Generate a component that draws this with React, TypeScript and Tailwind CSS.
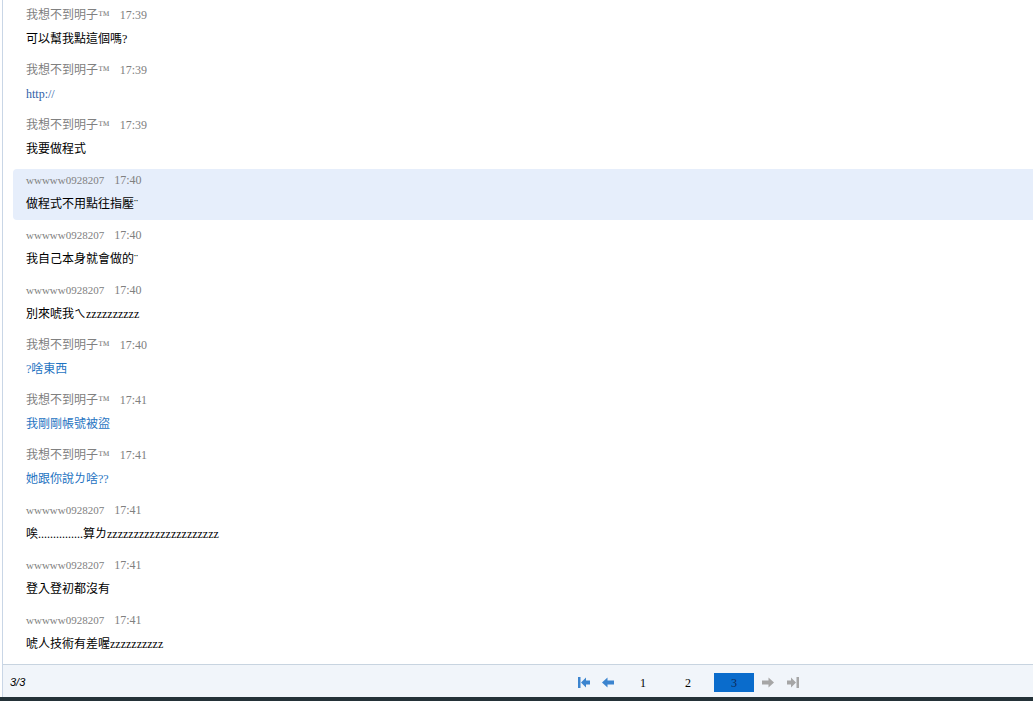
import React from "react";

type Msg = {
  name: string;
  time: string;
  text: string;
  tone?: "blue" | "link";
  active?: boolean;
};

const ME = "我想不到明子™";
const HIM = "wwwww0928207";

const messages: Msg[] = [
  { name: ME, time: "17:39", text: "可以幫我點這個嗎?" },
  { name: ME, time: "17:39", text: "http://", tone: "link" },
  { name: ME, time: "17:39", text: "我要做程式" },
  { name: HIM, time: "17:40", text: "做程式不用點往指壓¨", active: true },
  { name: HIM, time: "17:40", text: "我自己本身就會做的¨" },
  { name: HIM, time: "17:40", text: "別來唬我ㄟzzzzzzzzzz" },
  { name: ME, time: "17:40", text: "?啥東西", tone: "blue" },
  { name: ME, time: "17:41", text: "我剛剛帳號被盜", tone: "blue" },
  { name: ME, time: "17:41", text: "她跟你說ㄌ啥??", tone: "blue" },
  { name: HIM, time: "17:41", text: "唉...............算ㄌzzzzzzzzzzzzzzzzzzzzz" },
  { name: HIM, time: "17:41", text: "登入登初都沒有" },
  { name: HIM, time: "17:41", text: "唬人技術有差喔zzzzzzzzzz" },
];

const font = "font-['Liberation_Serif','Noto_Sans_CJK_TC',serif]";

const FirstIcon = ({ color }: { color: string }) => (
  <svg width="12" height="11" viewBox="0 0 12 11">
    <rect x="0" y="0" width="2.5" height="11" fill={color} />
    <path d="M3 5.5 L8 0.5 L8 3.5 L12 3.5 L12 7.5 L8 7.5 L8 10.5 Z" fill={color} />
  </svg>
);

const PrevIcon = ({ color }: { color: string }) => (
  <svg width="12" height="11" viewBox="0 0 12 11">
    <path d="M0 5.5 L5.5 0.5 L5.5 3.5 L12 3.5 L12 7.5 L5.5 7.5 L5.5 10.5 Z" fill={color} />
  </svg>
);

const NextIcon = ({ color }: { color: string }) => (
  <svg width="12" height="11" viewBox="0 0 12 11">
    <path d="M12 5.5 L6.5 0.5 L6.5 3.5 L0 3.5 L0 7.5 L6.5 7.5 L6.5 10.5 Z" fill={color} />
  </svg>
);

const LastIcon = ({ color }: { color: string }) => (
  <svg width="12" height="11" viewBox="0 0 12 11">
    <path d="M9 5.5 L4 0.5 L4 3.5 L0 3.5 L0 7.5 L4 7.5 L4 10.5 Z" fill={color} />
    <rect x="9.5" y="0" width="2.5" height="11" fill={color} />
  </svg>
);

const App = () => {
  return (
    <div className={`w-[1033px] h-[701px] overflow-hidden bg-white ${font}`}>
      <div className="ml-[2px] h-[697px] border-l border-[#c9d6e6] flex flex-col">
        <div className="h-[664px] overflow-hidden">
          {messages.map((m, i) => (
            <div key={i} className="h-[55px] pt-[4px] pl-[10px]">
              <div
                className={`h-[51px] pl-[13px] pt-[4px] rounded-l-[4px] ${
                  m.active ? "bg-[#e6eefb]" : ""
                }`}
              >
                <div className="flex h-[14px] items-center text-[12px] leading-[14px] text-[#808080]">
                  <span className={m.name === HIM ? "text-[11px]" : ""}>{m.name}</span>
                  <span className="ml-[10px]">{m.time}</span>
                </div>
                <div
                  className={`mt-[9px] h-[16px] text-[12px] leading-[16px] whitespace-nowrap ${
                    m.tone === "blue"
                      ? "text-[#1f74c2]"
                      : m.tone === "link"
                      ? "text-[#2f5ea8]"
                      : "text-black"
                  }`}
                >
                  {m.text}
                </div>
              </div>
            </div>
          ))}
        </div>
        <div className="h-[33px] pt-[3px] border-t border-[#c8d4e0] bg-[#f1f5fa] flex items-center">
          <span className="ml-[7px] text-[11px] italic text-black font-['Liberation_Sans',sans-serif]">
            3/3
          </span>
          <div className="ml-auto mr-[234px] flex items-center text-[12px] text-black">
            <FirstIcon color="#3b84cf" />
            <span className="ml-[12px]">
              <PrevIcon color="#3b84cf" />
            </span>
            <div className="ml-[9px] flex items-center gap-[5px]">
              <span className="w-[40px] h-[19px] flex items-center justify-center">1</span>
              <span className="w-[40px] h-[19px] flex items-center justify-center">2</span>
              <span className="ml-[1px] w-[40px] h-[19px] flex items-center justify-center bg-[#0a6ccc] text-[#0d2a5a]">
                3
              </span>
            </div>
            <span className="ml-[8px]">
              <NextIcon color="#a6a6a6" />
            </span>
            <span className="ml-[13px]">
              <LastIcon color="#a6a6a6" />
            </span>
          </div>
        </div>
      </div>
      <div className="h-[4px] bg-[#243238]" />
    </div>
  );
};

export default App;
